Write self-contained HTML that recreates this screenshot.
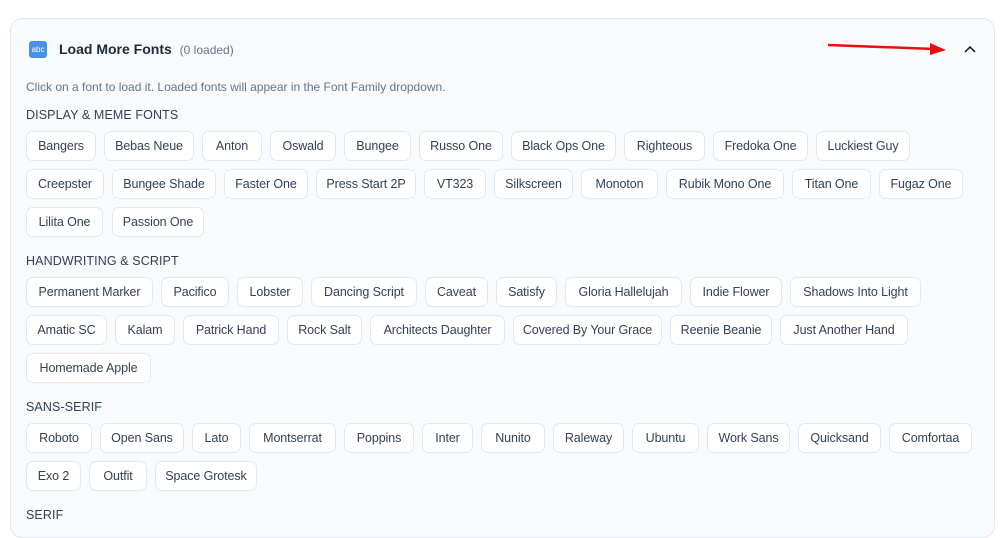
<!DOCTYPE html>
<html><head><meta charset="utf-8"><style>
*{box-sizing:border-box;margin:0;padding:0}
body{width:1008px;height:520px;overflow:hidden;background:#fff;font-family:"Liberation Sans",sans-serif;position:relative}
.panel{position:absolute;left:10px;top:18px;width:985px;height:520px;background:#f8fafc;border:1px solid #e2e8f0;border-radius:12px}
.b{position:absolute;height:30px;background:#fff;border:1px solid #e2e8f0;border-radius:7px;font-size:12.5px;color:#334155;display:flex;align-items:center;justify-content:center;white-space:nowrap;letter-spacing:-0.1px}
.l{position:absolute;left:26px;font-size:12.5px;color:#334155;letter-spacing:0.1px}
</style></head><body>
<div class="panel"></div>
<div style="position:absolute;left:29px;top:41px;width:18px;height:17px;background:#4a90e2;border-radius:3px;color:#fff;font-size:8px;display:flex;align-items:center;justify-content:center">abc</div>
<div style="position:absolute;left:59px;top:41px;font-size:14px;font-weight:bold;color:#1e293b">Load More Fonts <span style="font-weight:normal;font-size:12px;color:#64748b;margin-left:4px">(0 loaded)</span></div>
<svg style="position:absolute;left:826px;top:38px" width="150" height="22"><line x1="2" y1="7" x2="108" y2="11" stroke="#e51010" stroke-width="2.5"/><polygon points="104,5 120,12 104,17" fill="#e51010"/><polyline points="139,14 144,9 149,14" fill="none" stroke="#111" stroke-width="1.5"/></svg>
<div style="position:absolute;left:26px;top:80px;font-size:12px;color:#64748b">Click on a font to load it. Loaded fonts will appear in the Font Family dropdown.</div>
<div class="l" style="top:108px">DISPLAY &amp; MEME FONTS</div>
<div class="b" style="top:131px;left:26px;width:70px">Bangers</div>
<div class="b" style="top:131px;left:104px;width:90px">Bebas Neue</div>
<div class="b" style="top:131px;left:202px;width:60px">Anton</div>
<div class="b" style="top:131px;left:270px;width:66px">Oswald</div>
<div class="b" style="top:131px;left:344px;width:67px">Bungee</div>
<div class="b" style="top:131px;left:419px;width:84px">Russo One</div>
<div class="b" style="top:131px;left:511px;width:105px">Black Ops One</div>
<div class="b" style="top:131px;left:624px;width:81px">Righteous</div>
<div class="b" style="top:131px;left:713px;width:95px">Fredoka One</div>
<div class="b" style="top:131px;left:816px;width:94px">Luckiest Guy</div>
<div class="b" style="top:169px;left:26px;width:78px">Creepster</div>
<div class="b" style="top:169px;left:112px;width:104px">Bungee Shade</div>
<div class="b" style="top:169px;left:224px;width:84px">Faster One</div>
<div class="b" style="top:169px;left:316px;width:100px">Press Start 2P</div>
<div class="b" style="top:169px;left:424px;width:62px">VT323</div>
<div class="b" style="top:169px;left:494px;width:79px">Silkscreen</div>
<div class="b" style="top:169px;left:581px;width:77px">Monoton</div>
<div class="b" style="top:169px;left:666px;width:118px">Rubik Mono One</div>
<div class="b" style="top:169px;left:792px;width:79px">Titan One</div>
<div class="b" style="top:169px;left:879px;width:84px">Fugaz One</div>
<div class="b" style="top:207px;left:26px;width:77px">Lilita One</div>
<div class="b" style="top:207px;left:112px;width:92px">Passion One</div>
<div class="l" style="top:254px">HANDWRITING &amp; SCRIPT</div>
<div class="b" style="top:277px;left:26px;width:127px">Permanent Marker</div>
<div class="b" style="top:277px;left:161px;width:68px">Pacifico</div>
<div class="b" style="top:277px;left:237px;width:66px">Lobster</div>
<div class="b" style="top:277px;left:311px;width:106px">Dancing Script</div>
<div class="b" style="top:277px;left:425px;width:63px">Caveat</div>
<div class="b" style="top:277px;left:496px;width:61px">Satisfy</div>
<div class="b" style="top:277px;left:565px;width:117px">Gloria Hallelujah</div>
<div class="b" style="top:277px;left:690px;width:92px">Indie Flower</div>
<div class="b" style="top:277px;left:790px;width:131px">Shadows Into Light</div>
<div class="b" style="top:315px;left:26px;width:81px">Amatic SC</div>
<div class="b" style="top:315px;left:115px;width:60px">Kalam</div>
<div class="b" style="top:315px;left:183px;width:96px">Patrick Hand</div>
<div class="b" style="top:315px;left:287px;width:75px">Rock Salt</div>
<div class="b" style="top:315px;left:370px;width:135px">Architects Daughter</div>
<div class="b" style="top:315px;left:513px;width:149px">Covered By Your Grace</div>
<div class="b" style="top:315px;left:670px;width:102px">Reenie Beanie</div>
<div class="b" style="top:315px;left:780px;width:128px">Just Another Hand</div>
<div class="b" style="top:353px;left:26px;width:125px">Homemade Apple</div>
<div class="l" style="top:400px">SANS-SERIF</div>
<div class="b" style="top:423px;left:26px;width:66px">Roboto</div>
<div class="b" style="top:423px;left:100px;width:84px">Open Sans</div>
<div class="b" style="top:423px;left:192px;width:49px">Lato</div>
<div class="b" style="top:423px;left:249px;width:87px">Montserrat</div>
<div class="b" style="top:423px;left:344px;width:70px">Poppins</div>
<div class="b" style="top:423px;left:422px;width:51px">Inter</div>
<div class="b" style="top:423px;left:481px;width:64px">Nunito</div>
<div class="b" style="top:423px;left:553px;width:71px">Raleway</div>
<div class="b" style="top:423px;left:632px;width:67px">Ubuntu</div>
<div class="b" style="top:423px;left:707px;width:83px">Work Sans</div>
<div class="b" style="top:423px;left:798px;width:83px">Quicksand</div>
<div class="b" style="top:423px;left:889px;width:83px">Comfortaa</div>
<div class="b" style="top:461px;left:26px;width:55px">Exo 2</div>
<div class="b" style="top:461px;left:89px;width:58px">Outfit</div>
<div class="b" style="top:461px;left:155px;width:102px">Space Grotesk</div>
<div class="l" style="top:508px">SERIF</div>
</body></html>
